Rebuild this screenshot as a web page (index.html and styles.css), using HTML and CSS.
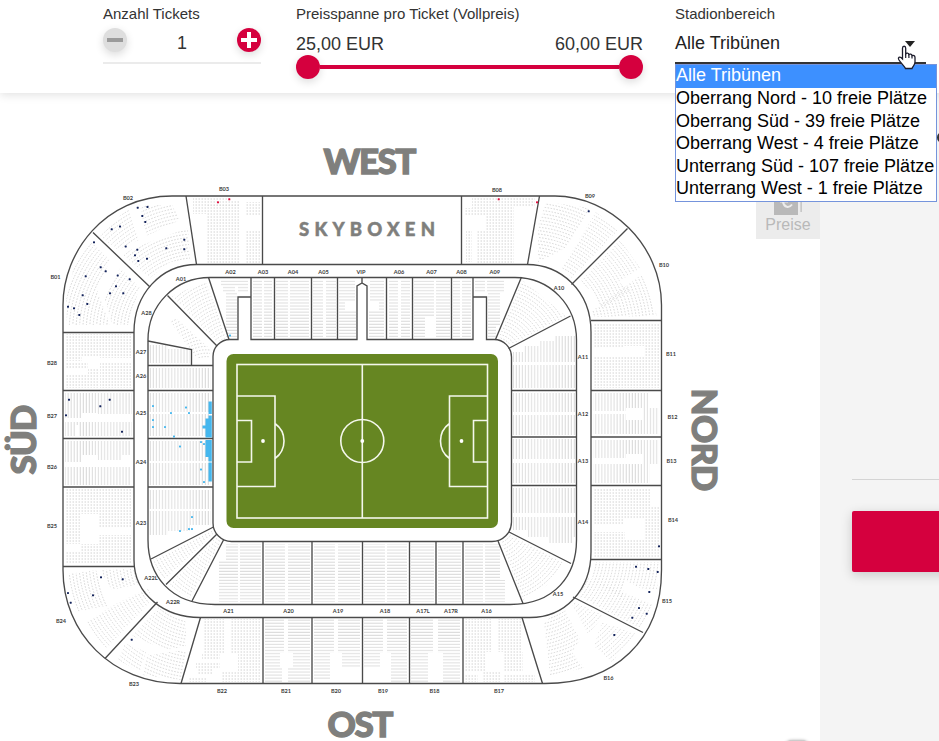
FILE: index.html
```html
<!DOCTYPE html>
<html lang="de">
<head>
  <meta charset="UTF-8">
  <title>Platzauswahl</title>
  <meta name="viewport" content="width=device-width, initial-scale=1.0">
  <link rel="stylesheet" href="styles.css">
</head>
<body>

  <header class="filter">
    <div class="feld tickets">
      <div class="label">Anzahl Tickets</div>
      <div class="stepper">
        <button class="rund minus" aria-label="weniger">
          <svg width="24" height="24"><path d="M4 12h16" stroke="#9b9b9b" stroke-width="4"/></svg>
        </button>
        <span>1</span>
        <button class="rund plus" aria-label="mehr">
          <svg width="24" height="24"><path d="M4 12h16M12 4v16" stroke="#fff" stroke-width="4"/></svg>
        </button>
      </div>
    </div>

    <div class="feld preis">
      <div class="label">Preisspanne pro Ticket (Vollpreis)</div>
      <div class="werte"><span>25,00 EUR</span><span>60,00 EUR</span></div>
      <div class="slider"><i class="griff"></i><i class="linie"></i><i class="griff"></i></div>
    </div>

    <div class="feld bereich">
      <div class="label">Stadionbereich</div>
      <div class="auswahl"><span>Alle Tribünen</span><i class="pfeil"></i></div>
      <ul class="liste">
        <li class="aktiv">Alle Tribünen</li>
        <li>Oberrang Nord - 10 freie Plätze</li>
        <li>Oberrang Süd - 39 freie Plätze</li>
        <li>Oberrang West - 4 freie Plätze</li>
        <li>Unterrang Süd - 107 freie Plätze</li>
        <li>Unterrang West - 1 freie Plätze</li>
      </ul>
      <svg class="zeiger" width="20" height="25" viewBox="0 0 20 25">
        <path d="M5.500 14V3.200C5.500 .6 8.700 .6 8.700 3.200V9C9.500 7.700 11.700 8 11.900 9.600 13 8.600 14.800 9.200 15 10.600 16.500 9.900 18 10.800 18 12.400V17C18 20 16 21 15 23.500H8.500C7.500 21 4 18.500 1.700 14.500 .7 12.500 2.600 11.400 4 12.600Z" fill="#fff" stroke="#1c1c2c" stroke-width="1.300"/>
        <path d="M8.700 9v4M11.900 9.600V13M15 10.600V13.500" stroke="#1c1c2c" stroke-width="1.200"/>
      </svg>
    </div>
  </header>

  <main class="inhalt">
    <section class="plan">
      <svg class="stadion" width="820" height="648" viewBox="0 93 820 648">
        <defs>
          <pattern id="ph" width="3" height="3.05" patternUnits="userSpaceOnUse"><path d="M0 1h3" stroke="#dcdcdc" stroke-width="1"/></pattern>
          <pattern id="pv" width="3.050" height="3" patternUnits="userSpaceOnUse"><path d="M1 0v3" stroke="#dcdcdc" stroke-width="1"/></pattern>
          <pattern id="pd" width="3" height="3" patternUnits="userSpaceOnUse"><path d="M.5 1h1.500" stroke="#d2d2d2" stroke-width="1"/></pattern>
        </defs>

        <g id="reihen"></g>

        <!-- Blockgrenzen -->
        <g class="grenzen">
          <path d="M63 305C63 252 105 196 172 196H555C610 196 661.500 245 661.500 305V570C661.500 640 615 683.500 545 683.500H180C112 683.500 63 633 63 570Z"/>
          <path d="M134 332C134 295 160 264.500 197 264.500H527C560 264.500 591 290 591 332V552C591 590 565 617.500 530 617.500H200C165 617.500 134 595 134 560Z"/>
          <path d="M148 340C148 305 175 277.500 210 277.500H515C550 277.500 576.500 305 576.500 340V540C576.500 575 555 604.500 510 604.500H215C170 604.500 148 575 148 540Z"/>
          <path d="M251 277.500V339.500H357V286L362 283L367 286V339.500H473V277.500M362 277.500V283M251 297H238V339.500H230A17 17 0 0 0 213 356.500V523A18.500 18.500 0 0 0 231.500 541.500H492A19.500 19.500 0 0 0 511.500 522V357A17.500 17.500 0 0 0 494 339.500H486.500V297H473"/>
          <path d="M274.500 277.500v62M311.500 277.500v62M337.500 277.500v62M386.500 277.500v62M412.500 277.500v62M451.500 277.500v62"/>
          <path d="M521.500 277L495.500 339.500M570.500 316L508.500 348.500M208.500 277.500L229 339.500M167.500 295.500L217 346M148 341L191.500 349.500V365.500M148 365.500H213"/>
          <path d="M148 390.500h65M148 438.500h65M148 487h65M511.500 390.500h65M511.500 437h65M511.500 485.500h65"/>
          <path d="M213.500 527L151 559M217 534L166 584.500M223.500 540L192 601M498 541L523 603.500M509 532L571 563.500"/>
          <path d="M263 541.500v63M312 541.500v63M362.500 541.500v63M409.500 541.500v63M436 541.500v63M463 541.500v63"/>
          <path d="M263 617.500v66M312 617.500v66M362.500 617.500v66M409.500 617.500v66M463 617.500v66M522 617.500L542.500 683.500M200.500 617.500L181 683.500M157.500 602L105 658.500"/>
          <path d="M63 566.500h72M63 487h71M63 438.500h71M63 390.500h71M63 332.500h71M93 232.500L150 287M186 196L196.500 264.500M262.500 196v68.500M461.500 196v68.500M539.500 196L527.500 264.500M627.500 228.500L571.500 284.500"/>
          <path d="M591 320.500h70.500M591 390.500h70.500M591 437h70.500M591 485.500h70.500M591 559.500h70.500M573 597L643 632.500"/>
        </g>

        <!-- Spielfeld -->
        <rect x="226.500" y="354" width="271.500" height="174" rx="7" fill="#668622"/>
        <g class="feldlinien">
          <rect x="237" y="364.500" width="250.500" height="153.500"/>
          <path d="M362.300 364.500v153.500M237 396h38v90.500h-38M237 420.500h14.500V462H237M487.500 396H449.500v90.500h38M487.500 420.500H473.500V462h14M275 423.500A21.500 21.500 0 0 1 275 458.500M449.500 423.500A21.500 21.500 0 0 0 449.500 458.500"/>
          <circle cx="362.300" cy="441" r="21.500"/>
        </g>
        <g fill="#fff"><circle cx="263" cy="441" r="1.900"/><circle cx="362.300" cy="441" r="1.900"/><circle cx="461.500" cy="441" r="1.900"/></g>

        <!-- freie Plätze -->
        <g fill="#45b7ee">
          <path d="M208.500 401.500h3.300v12.500h-3.300zM208.500 415.500h3.300v22h-3.300zM205.500 418.500h3v19h-3zM202.500 425.500h3v3h-3zM208.500 440h3.300v21.500h-3.300zM208.500 462.500h3.300v19h-3.300zM205.500 440h3v17h-3z"/>
        </g>
        <g id="plaetze"></g>

        <g id="bloecke"></g>

        <g class="seiten">
          <text x="323.500" y="173.500" textLength="93">WEST</text>
          <text x="327.500" y="736.500" textLength="66">OST</text>
          <text transform="translate(691.500 388.500) rotate(90)" textLength="103">NORD</text>
          <text transform="translate(35.500 474.500) rotate(-90)" textLength="70">SÜD</text>
          <text class="sky" x="299" y="236" textLength="136">SKYBOXEN</text>
        </g>
      </svg>

      <div class="preise">
        <svg width="32" height="24" viewBox="0 0 32 24">
          <path d="M2 0h24v24H2zM28.500 0h1.200v21h-1.200z" fill="#b9b9b9"/>
          <path d="M20 13.500c-3 4-8 3-9-2.500M8 10.500h8" fill="none" stroke="#ececec" stroke-width="2"/>
        </svg>
        <span>Preise</span>
      </div>
      <div class="knopf"></div>
    </section>

    <aside class="korb">
      <div class="punkt"></div>
      <div class="trenner"></div>
      <div class="kaufen"></div>
    </aside>
  </main>

  <script src="plan.js"></script>
</body>
</html>
```
FILE: styles.css
```css
* {
  box-sizing: border-box;
}

body {
  margin: 0;
  width: 939px;
  height: 741px;
  overflow: hidden;
  background: #fff;
  color: #333;
  font-family: "Liberation Sans", Arial, sans-serif;
  font-size: 18px;
}

.filter {
  position: relative;
  z-index: 2;
  display: grid;
  grid-template-columns: 158px 348px 251px;
  column-gap: 34px;
  height: 93px;
  padding: 5px 0 0 103px;
  background: #fff;
  box-shadow: 0 2px 9px rgba(0,0,0,0.12);
}

.preis {
  padding-left: 1px;
}

.bereich {
  position: relative;
  margin-left: -2px;
}

.label {
  height: 18px;
  font-size: 15px;
  line-height: 18px;
  white-space: nowrap;
}

.stepper {
  display: flex;
  justify-content: space-between;
  height: 41px;
  padding-top: 5px;
  border-bottom: 2px solid #ebebeb;
}

.stepper span {
  line-height: 30px;
}

.rund {
  width: 24px;
  height: 24px;
  padding: 0;
  border: none;
  border-radius: 50%;
  box-shadow: 0 3px 8px rgba(0,0,0,0.14);
}

.rund svg {
  display: block;
}

.minus { background: #dedede; }
.plus { background: #d5003e; }

.werte {
  display: flex;
  justify-content: space-between;
  height: 32px;
  padding-top: 5px;
  line-height: 32px;
}

.slider {
  display: flex;
  align-items: center;
}

.griff {
  width: 24px;
  height: 24px;
  border-radius: 50%;
  background: #d5003e;
  box-shadow: 0 3px 8px rgba(0,0,0,0.14);
}

.linie {
  flex: 1;
  height: 4px;
  background: #d5003e;
}

.auswahl {
  display: flex;
  justify-content: space-between;
  width: 251px;
  height: 41px;
  padding: 5px 11px 0 0;
  border-bottom: 2px solid #333;
  color: #222;
  line-height: 30px;
}

.pfeil {
  width: 10px;
  height: 6px;
  margin-top: 13px;
  background: #222;
  clip-path: polygon(0 0, 100% 0, 50% 100%);
}

.liste {
  position: absolute;
  top: 59px;
  left: 0;
  width: 262px;
  height: 138px;
  margin: 0;
  padding: 0;
  border: 1px solid #7594dc;
  background: #fff;
  color: #000;
  list-style: none;
}

.liste li {
  height: 22.5px;
  line-height: 21px;
  white-space: nowrap;
}

.liste .aktiv {
  height: 23px;
  background: #3d90ff;
  color: #fff;
}

.zeiger {
  position: absolute;
  top: 40px;
  left: 222px;
}

.inhalt {
  display: flex;
  height: 648px;
}

.plan {
  position: relative;
  width: 820px;
}

.stadion {
  display: block;
}

.grenzen {
  fill: none;
  stroke: #4a4a4a;
  stroke-width: 1.35;
}

.feldlinien {
  fill: none;
  stroke: #f4f7ec;
  stroke-width: 1.6;
}

.bogen {
  fill: none;
  stroke: #d3d3d3;
  stroke-width: 1;
  stroke-dasharray: 1.5 1.5;
}

.block {
  fill: #3c3c3c;
  font: bold 5.6px Lato, sans-serif;
  text-anchor: middle;
}

.seiten {
  fill: #7f7f7d;
  stroke: #7f7f7d;
  stroke-width: 1.3;
  font: 900 35px Lato, sans-serif;
}

.sky {
  stroke-width: 0.5;
  font-size: 18.5px;
}

.preise {
  position: absolute;
  top: 98px;
  right: 0;
  display: flex;
  flex-direction: column;
  align-items: center;
  width: 64px;
  height: 48px;
  background: #ececec;
  color: #b9b9b9;
  font-size: 16px;
  line-height: 20px;
}

.knopf {
  position: absolute;
  top: 647px;
  left: 784px;
  width: 26px;
  height: 26px;
  border-radius: 8px;
  background: #ccc;
  box-shadow: 0 0 3px rgba(0,0,0,0.3);
}

.korb {
  flex: 1;
  padding-left: 32px;
  overflow: hidden;
  background: #f4f4f4;
}

.punkt {
  width: 11px;
  height: 11px;
  margin: 39px 0 0 85px;
  border-radius: 50%;
  background: #333;
}

.trenner {
  height: 1px;
  margin-top: 336px;
  background: #d4d4d4;
}

.kaufen {
  width: 120px;
  height: 61px;
  margin-top: 31px;
  border-radius: 2px;
  background: #d5003e;
  box-shadow: 0 3px 12px rgba(0,0,0,0.18);
}
```
FILE: plan.js
```js
const NS = "http://www.w3.org/2000/svg";

function neu(tag, attrs, ziel) {
  const el = document.createElementNS(NS, tag);
  for (const k in attrs) el.setAttribute(k, attrs[k]);
  ziel.appendChild(el);
  return el;
}

const reihen = document.getElementById("reihen");

// gerade Reihen: Muster und Flächen [x1, y1, x2, y2]
const flaechen = {
  pd: [
    [193,198,206,214],[206,198,230,206],[206,205,239,263],[230,200,240,206],[245,202,260,216],[245,231,260,263],
    [485,198,514,263],[514,198,535,206],[464,208,485,215],[472,198,485,208],[466,231,472,262],[476,231,485,263],
    [65,334,132,356],[65,356,82,361],[100,356,132,358],[65,362,88,369],[65,374,88,388],[88,369,98,388],[100,362,132,388],
    [65,489,132,514],[65,514,80,544],[80,544,98,563],[99,514,132,528],[99,535,132,563],[65,552,80,563],
    [593,323,659,346],[593,357,660,388],[593,346,623,348],[645,346,659,357],
    [593,488,650,518],[593,518,624,524],[593,532,625,557],[644,518,660,540],[625,540,660,557],[650,506,660,518],
    [203,619,225,653],[231,619,261,653],[202,653,220,660],[238,653,261,682],[188,678,206,682],[196,662,220,668],[198,668,212,674],[222,672,238,682],
    [465,619,492,652],[497,619,521,652],[465,652,486,672],[504,652,523,672],[465,674,478,682],[482,672,500,682],[503,674,535,682]
  ],
  ph: [
    [221,280,248,286],[223,286,235,292],[226,292,237,337],[238,286,248,292],
    [253,280,262,337],[264,280,272,337],[276,280,288,337],[290,280,309,337],[313,280,323,337],[326,280,336,337],
    [339,280,355,301],[339,301,345,311],[339,311,356,337],[370,280,384,301],[379,301,384,311],[369,311,384,337],
    [389,280,398,337],[401,280,410,337],[414,280,425,337],[425,280,434,317],[436,280,450,337],[453,280,460,337],[462,280,471,337],
    [475,280,485,292],[487,280,504,293],[488,293,500,325],[488,325,496,337],
    [219,560,238,602],[226,544,238,560],[240,544,261,602],[265,544,285,602],[288,544,310,602],[314,544,335,602],[338,544,360,602],
    [364,544,385,602],[387,544,407,602],[411,544,434,602],[438,544,461,602],[465,544,483,602],[485,544,500,580],[485,580,505,602],
    [265,619,284,653],[288,619,310,653],[265,653,280,667],[293,653,310,667],[265,667,282,682],[288,667,310,682],
    [314,619,334,653],[338,619,360,653],[314,653,330,667],[342,653,360,667],[314,667,330,680],
    [364,619,383,653],[387,619,407,653],[364,653,380,667],[391,653,407,682],
    [411,619,433,653],[438,619,460,653],[411,653,428,682],[443,653,460,682]
  ],
  pv: [
    [65,393,132,413],[65,413,82,418],[98,413,132,414],[65,422,132,425],[78,425,132,436],[65,425,75,436],
    [65,441,130,455],[65,455,82,462],[98,455,122,460],[65,467,131,485],
    [149,345,168,363],[168,349,190,363],[149,368,211,388],[149,393,211,412],[149,414,211,436],[149,441,211,461],[149,463,211,485],
    [149,490,211,509],[149,511,211,525],[149,525,190,531],[149,531,168,535],
    [524,346,575,352],[540,341,575,346],[555,336,575,341],[513,352,575,362],[513,365,575,388],[513,393,575,412],[513,415,575,435],[513,439,575,459],[513,463,575,483],
    [513,488,575,513],[513,517,575,530],[528,530,575,537],[548,537,573,543],
    [593,393,648,408],[593,408,626,411],[593,414,626,434],[626,420,659,434],[642,408,659,420],
    [593,440,659,454],[593,454,626,458],[593,464,650,483],[642,454,659,464]
  ]
};

for (const muster in flaechen) {
  for (const [x1, y1, x2, y2] of flaechen[muster]) {
    neu("rect", { x: x1, y: y1, width: x2 - x1, height: y2 - y1, fill: `url(#${muster})` }, reihen);
  }
}

// Kurvenblöcke: Umriss, Kreismitte, innerer und äusserer Radius
const kurven = [
  ["67,325 66,300 73,270 90,240 110,260 97,290 110,325", 196, 332, 86, 140],
  ["112,325 104,296 120,268 140,288 132,310 130,325", 196, 332, 62, 120],
  ["100,236 128,208 139,240 118,250", 196, 332, 64, 150],
  ["140,205 172,205 180,220 146,236", 196, 332, 64, 150],
  ["122,254 142,245 188,228 190,259 170,262 150,278", 196, 332, 64, 150],
  ["546,202 590,208 566,248 538,262 538,226", 527, 340, 76, 150],
  ["596,212 618,230 572,278 562,268", 527, 340, 70, 150],
  ["620,240 640,268 618,282 632,290 602,308 590,290 580,282", 527, 332, 58, 130],
  ["642,274 657,316 592,317 592,311", 527, 332, 66, 140],
  ["68,574 96,570 108,606 76,612", 200, 560, 60, 136],
  ["100,570 134,569 140,584 112,590", 200, 560, 60, 120],
  ["112,606 148,588 152,600 105,650 87,622", 200, 560, 60, 136],
  ["160,606 186,622 186,646 166,650 132,636", 200, 560, 60, 136],
  ["125,643 146,652 140,672 118,660", 200, 560, 60, 136],
  ["147,655 186,650 182,680 142,675", 200, 560, 60, 136],
  ["594,562 659,562 657,590 640,588 625,580 622,598 592,580", 527, 552, 60, 136],
  ["588,578 656,606 640,628 578,596", 527, 552, 60, 136],
  ["544,622 564,608 580,640 572,652 584,668 550,676", 527, 552, 60, 142],
  ["570,600 604,616 588,634", 527, 552, 60, 142],
  ["602,622 636,634 612,662 594,646", 527, 552, 60, 142],
  ["172,296 206,281 226,338 217,342", 232, 358, 21, 86],
  ["170,321 176,318 211,350 208,359 196,358", 206, 380, 20, 70],
  ["522,280 566,316 510,345 499,337", 494, 358, 21, 86],
  ["212,531 214,533 164,580 153,560", 230, 524, 20, 90],
  ["218,536 221,541 190,598 169,585", 230, 524, 20, 90],
  ["508,534 564,563 546,586 523,600 501,541", 494, 524, 20, 82]
];

kurven.forEach(([punkte, cx, cy, r1, r2], i) => {
  const clip = neu("clipPath", { id: "k" + i }, reihen);
  neu("polygon", { points: punkte }, clip);
  const g = neu("g", { "clip-path": `url(#k${i})` }, reihen);
  for (let r = r1; r < r2; r += 3.4) {
    neu("circle", { cx, cy, r, class: "bogen" }, g);
  }
});

// einzelne freie Plätze nach Farbe
const plaetze = {
  "#45b7ee": [[153,406],[171,413],[186,407.5],[189,413],[153,420],[153,427],[165,427],[174,436.5],[201,442],[204,444],[180,446.5],[201,469.5],[204,482],[192,517],[180,531],[189,529],[192,529],[230,335.5]],
  "#14245c": [
    [137.7,207.7],[147.5,207],[142.3,216],[145.3,222],[120,226.5],[111.7,229.3],[125.7,246.5],[137.3,249.7],[135,255.3],[138.3,261],[147,258.7],[166.3,248.3],[184.3,239.7],[184.3,249.3],
    [94,242.3],[100.7,267.3],[105.7,271.3],[85.7,276.3],[117.7,275.5],[129.7,279.3],[116,286.3],[110,293.3],[123.3,293.3],[82.7,295.3],[87.3,304],[68,306.7],[74,308.3],[79.3,315],
    [69,399.7],[109.7,399.7],[100.3,406.3],[66,415.3],[122,431.7],
    [101,577.3],[122.7,579.3],[68,593],[70.7,602.7],[93,595.3],[131.7,639.7],
    [659,546.3],[636,566.7],[648.3,569],[657.7,572],[649.3,592],[639,608],[646.7,613.7],[632.3,617.7],[614.3,635],[588.7,211.3]
  ],
  "#e0103f": [[218,202.3],[229.3,199.3],[498.7,199.3],[537,202.3]]
};

for (const farbe in plaetze) {
  for (const [x, y] of plaetze[farbe]) {
    neu("rect", { x: x - 1, y: y - 1, width: 2, height: 2, rx: 0.4, fill: farbe }, document.getElementById("plaetze"));
  }
}

const bloecke = {
  B01: [55.5,277], B02: [128,198], B03: [224,189], B08: [497,189.5], B09: [590,196], B10: [664,265],
  B11: [671,354], B12: [672.5,417], B13: [671.5,461], B14: [673,519.5], B15: [667,600.5], B16: [608.5,678],
  B17: [499,691], B18: [434.5,690.5], B19: [383,690.5], B20: [336,690.5], B21: [286,690.5], B22: [222,690.5],
  B23: [134,684], B24: [61,621], B25: [52,526], B26: [52,466.5], B27: [52,416], B28: [52,363],
  A01: [181,279], A02: [230.5,272], A03: [263,272], A04: [293,272], A05: [323.5,272], VIP: [361,272],
  A06: [399,272], A07: [431.5,272], A08: [461.5,272], A09: [494.7,272], A10: [559,288], A11: [583,356.5],
  A12: [583,413.5], A13: [583,461], A14: [583,521.5], A15: [558,594], A16: [486.5,610.5], A17R: [451,610.5],
  A17L: [423,610.5], A18: [385,610.5], A19: [338,610.5], A20: [288.5,610.5], A21: [228.5,610.5],
  A22R: [173,602], A22L: [151,578], A23: [141,523], A24: [141,462], A25: [141,413], A26: [141,375.5],
  A27: [141,352], A28: [146.5,313]
};

for (const name in bloecke) {
  const [x, y] = bloecke[name];
  neu("text", { x, y: y + 2, class: "block" }, document.getElementById("bloecke")).textContent = name;
}
```
